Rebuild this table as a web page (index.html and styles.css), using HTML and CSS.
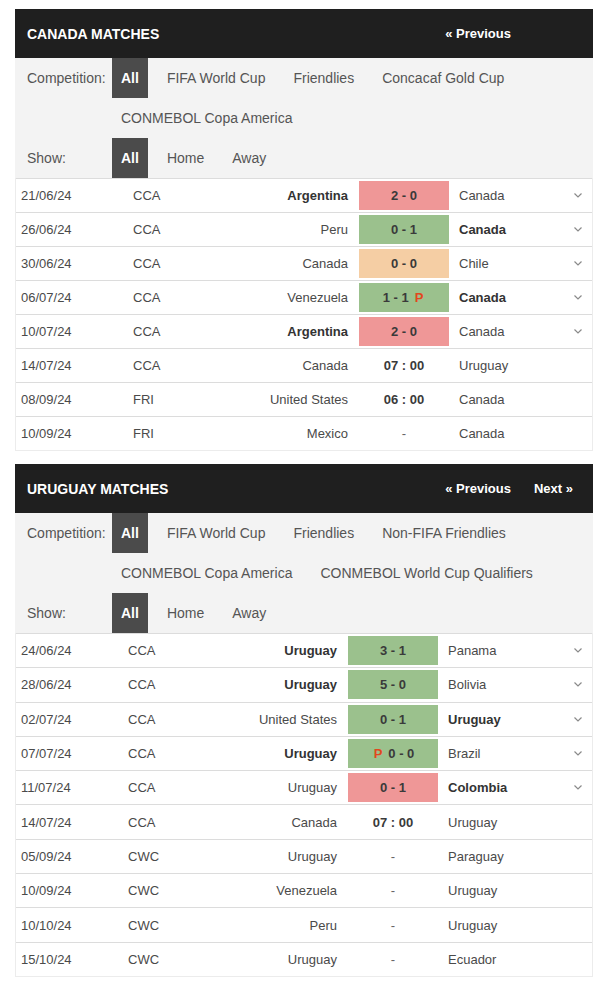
FILE: index.html
```html
<!DOCTYPE html>
<html lang="en">
<head>
<meta charset="utf-8">
<title>Matches</title>
<link rel="stylesheet" href="styles.css">
</head>
<body>
<div class="page">

  <section class="panel">
    <header class="panel-head">
      <h2 class="title">CANADA MATCHES</h2>
      <nav class="pager"><a class="pager-link">« Previous</a><a class="pager-link is-hidden">Next »</a></nav>
    </header>
    <div class="filters">
      <div class="filter-row">
        <span class="filter-label">Competition:</span>
        <ul class="opts">
          <li class="opt is-active">All</li>
          <li class="opt">FIFA World Cup</li>
          <li class="opt">Friendlies</li>
          <li class="opt">Concacaf Gold Cup</li>
          <li class="opt">CONMEBOL Copa America</li>
        </ul>
      </div>
      <div class="filter-row">
        <span class="filter-label">Show:</span>
        <ul class="opts">
          <li class="opt is-active">All</li>
          <li class="opt">Home</li>
          <li class="opt">Away</li>
        </ul>
      </div>
    </div>
    <div class="matches matches--can">
      <div class="match"><span class="date">21/06/24</span><span class="comp">CCA</span><span class="home strong">Argentina</span><span class="score"><span class="res res--loss">2 - 0</span></span><span class="away">Canada</span><span class="more"><svg class="chev" viewBox="0 0 8 5"><polyline points="0.5,0.5 4,4 7.5,0.5"/></svg></span></div>
      <div class="match"><span class="date">26/06/24</span><span class="comp">CCA</span><span class="home">Peru</span><span class="score"><span class="res res--win">0 - 1</span></span><span class="away strong">Canada</span><span class="more"><svg class="chev" viewBox="0 0 8 5"><polyline points="0.5,0.5 4,4 7.5,0.5"/></svg></span></div>
      <div class="match"><span class="date">30/06/24</span><span class="comp">CCA</span><span class="home">Canada</span><span class="score"><span class="res res--draw">0 - 0</span></span><span class="away">Chile</span><span class="more"><svg class="chev" viewBox="0 0 8 5"><polyline points="0.5,0.5 4,4 7.5,0.5"/></svg></span></div>
      <div class="match"><span class="date">06/07/24</span><span class="comp">CCA</span><span class="home">Venezuela</span><span class="score"><span class="res res--win">1 - 1 <b class="pen">P</b></span></span><span class="away strong">Canada</span><span class="more"><svg class="chev" viewBox="0 0 8 5"><polyline points="0.5,0.5 4,4 7.5,0.5"/></svg></span></div>
      <div class="match"><span class="date">10/07/24</span><span class="comp">CCA</span><span class="home strong">Argentina</span><span class="score"><span class="res res--loss">2 - 0</span></span><span class="away">Canada</span><span class="more"><svg class="chev" viewBox="0 0 8 5"><polyline points="0.5,0.5 4,4 7.5,0.5"/></svg></span></div>
      <div class="match"><span class="date">14/07/24</span><span class="comp">CCA</span><span class="home">Canada</span><span class="score"><span class="time">07 : 00</span></span><span class="away">Uruguay</span><span class="more"></span></div>
      <div class="match"><span class="date">08/09/24</span><span class="comp">FRI</span><span class="home">United States</span><span class="score"><span class="time">06 : 00</span></span><span class="away">Canada</span><span class="more"></span></div>
      <div class="match"><span class="date">10/09/24</span><span class="comp">FRI</span><span class="home">Mexico</span><span class="score"><span class="dash">-</span></span><span class="away">Canada</span><span class="more"></span></div>
    </div>
  </section>

  <section class="panel">
    <header class="panel-head">
      <h2 class="title">URUGUAY MATCHES</h2>
      <nav class="pager"><a class="pager-link">« Previous</a><a class="pager-link">Next »</a></nav>
    </header>
    <div class="filters">
      <div class="filter-row">
        <span class="filter-label">Competition:</span>
        <ul class="opts">
          <li class="opt is-active">All</li>
          <li class="opt">FIFA World Cup</li>
          <li class="opt">Friendlies</li>
          <li class="opt">Non-FIFA Friendlies</li>
          <li class="opt">CONMEBOL Copa America</li>
          <li class="opt">CONMEBOL World Cup Qualifiers</li>
        </ul>
      </div>
      <div class="filter-row">
        <span class="filter-label">Show:</span>
        <ul class="opts">
          <li class="opt is-active">All</li>
          <li class="opt">Home</li>
          <li class="opt">Away</li>
        </ul>
      </div>
    </div>
    <div class="matches matches--uru">
      <div class="match"><span class="date">24/06/24</span><span class="comp">CCA</span><span class="home strong">Uruguay</span><span class="score"><span class="res res--win">3 - 1</span></span><span class="away">Panama</span><span class="more"><svg class="chev" viewBox="0 0 8 5"><polyline points="0.5,0.5 4,4 7.5,0.5"/></svg></span></div>
      <div class="match"><span class="date">28/06/24</span><span class="comp">CCA</span><span class="home strong">Uruguay</span><span class="score"><span class="res res--win">5 - 0</span></span><span class="away">Bolivia</span><span class="more"><svg class="chev" viewBox="0 0 8 5"><polyline points="0.5,0.5 4,4 7.5,0.5"/></svg></span></div>
      <div class="match"><span class="date">02/07/24</span><span class="comp">CCA</span><span class="home">United States</span><span class="score"><span class="res res--win">0 - 1</span></span><span class="away strong">Uruguay</span><span class="more"><svg class="chev" viewBox="0 0 8 5"><polyline points="0.5,0.5 4,4 7.5,0.5"/></svg></span></div>
      <div class="match"><span class="date">07/07/24</span><span class="comp">CCA</span><span class="home strong">Uruguay</span><span class="score"><span class="res res--win"><b class="pen">P</b> 0 - 0</span></span><span class="away">Brazil</span><span class="more"><svg class="chev" viewBox="0 0 8 5"><polyline points="0.5,0.5 4,4 7.5,0.5"/></svg></span></div>
      <div class="match"><span class="date">11/07/24</span><span class="comp">CCA</span><span class="home">Uruguay</span><span class="score"><span class="res res--loss">0 - 1</span></span><span class="away strong">Colombia</span><span class="more"><svg class="chev" viewBox="0 0 8 5"><polyline points="0.5,0.5 4,4 7.5,0.5"/></svg></span></div>
      <div class="match"><span class="date">14/07/24</span><span class="comp">CCA</span><span class="home">Canada</span><span class="score"><span class="time">07 : 00</span></span><span class="away">Uruguay</span><span class="more"></span></div>
      <div class="match"><span class="date">05/09/24</span><span class="comp">CWC</span><span class="home">Uruguay</span><span class="score"><span class="dash">-</span></span><span class="away">Paraguay</span><span class="more"></span></div>
      <div class="match"><span class="date">10/09/24</span><span class="comp">CWC</span><span class="home">Venezuela</span><span class="score"><span class="dash">-</span></span><span class="away">Uruguay</span><span class="more"></span></div>
      <div class="match"><span class="date">10/10/24</span><span class="comp">CWC</span><span class="home">Peru</span><span class="score"><span class="dash">-</span></span><span class="away">Uruguay</span><span class="more"></span></div>
      <div class="match"><span class="date">15/10/24</span><span class="comp">CWC</span><span class="home">Uruguay</span><span class="score"><span class="dash">-</span></span><span class="away">Ecuador</span><span class="more"></span></div>
    </div>
  </section>

</div>
</body>
</html>
```
FILE: styles.css
```css
* { box-sizing: border-box; }

html, body {
  margin: 0;
  padding: 0;
  background: #fff;
}

body {
  font-family: "Liberation Sans", Arial, sans-serif;
  color: #4a4a4a;
}

.page {
  padding: 9px 7px 0 15px;
}

.panel {
  width: 578px;
  margin-bottom: 13px;
}

.panel-head {
  height: 49px;
  background: #1f1f1f;
  display: flex;
  align-items: center;
  justify-content: space-between;
  padding: 0 20px 0 12px;
}

.title {
  margin: 0;
  font-size: 14px;
  font-weight: bold;
  color: #fff;
  letter-spacing: 0;
}

.pager {
  display: flex;
  gap: 23px;
}

.pager-link {
  font-size: 13px;
  font-weight: bold;
  color: #fff;
}

.pager-link.is-hidden {
  visibility: hidden;
}

.filters {
  background: #f3f3f3;
  padding-left: 12px;
}

.filter-row {
  display: flex;
  align-items: flex-start;
}

.filter-label {
  flex: 0 0 85px;
  line-height: 40px;
  font-size: 14px;
  color: #555;
}

.opts {
  list-style: none;
  margin: 0;
  padding: 0;
  display: flex;
  flex-wrap: wrap;
  column-gap: 10px;
  flex: 1;
}

.opt {
  line-height: 40px;
  height: 40px;
  padding: 0 9px;
  font-size: 14px;
  color: #555;
  white-space: nowrap;
}

.opt.is-active {
  background: #4b4b4b;
  color: #fff;
  font-weight: bold;
}

.matches {
  border: 1px solid #ececec;
  border-top: 0;
  background: #fff;
}

.match {
  display: grid;
  height: 34px;
  border-top: 1px solid #dcdcdc;
  align-items: center;
  font-size: 13px;
  color: #4a4a4a;
}

.matches--uru .match {
  height: 34.3px;
}

.matches--can .match {
  grid-template-columns: 111px 80px 151px 92px 110px 32px;
}

.matches--uru .match {
  grid-template-columns: 106px 80px 145px 92px 121px 32px;
}

.date {
  padding-left: 5px;
}

.comp {
  padding-left: 6px;
}

.home {
  text-align: right;
  padding-right: 10px;
  white-space: nowrap;
}

.away {
  padding-left: 9px;
  white-space: nowrap;
}

.strong {
  font-weight: bold;
  color: #333;
}

.score {
  align-self: stretch;
  display: flex;
  align-items: center;
  justify-content: center;
}

.res {
  display: flex;
  align-items: center;
  justify-content: center;
  gap: 4px;
  width: calc(100% - 2px);
  height: 29px;
  font-weight: bold;
  color: #3a3a3a;
}

.res--loss { background: #ef9797; }
.res--win { background: #9bc18d; }
.res--draw { background: #f5cea4; }

.pen {
  color: #e2471d;
  margin: 0 2px;
}

.time {
  font-weight: bold;
  color: #3a3a3a;
}

.dash {
  color: #666;
}

.more {
  display: flex;
  justify-content: flex-end;
  padding-right: 10px;
}

.chev {
  width: 8px;
  height: 5px;
  fill: none;
  stroke: #8a8a8a;
  stroke-width: 1.2;
}
```
